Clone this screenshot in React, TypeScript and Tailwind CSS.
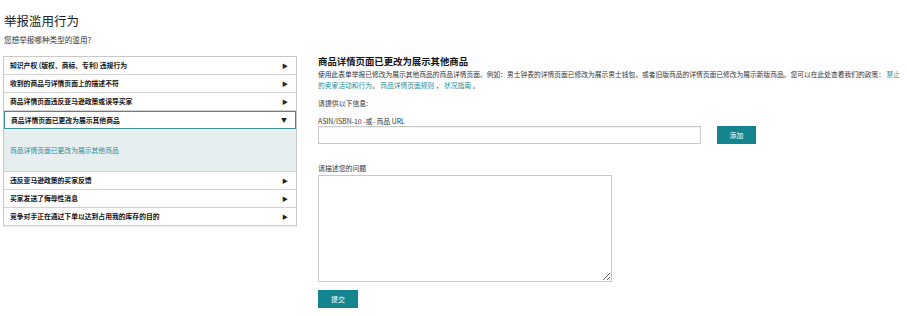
const rowsTop = [
  '知识产权 (版权、商标、专利) 违规行为',
  '收到的商品与详情页面上的描述不符',
  '商品详情页面违反亚马逊政策或误导买家',
];

const rowsBottom = [
  '违反亚马逊政策的买家反馈',
  '买家发送了侮辱性消息',
  '竞争对手正在通过下单以达到占用我的库存的目的',
];

const Row = ({ label }: { label: string }) => (
  <div className="flex h-[18px] items-center justify-between border-b border-[#d2d2d2] pl-[6px] pr-[8px]">
    <span className="text-[6.8px] font-bold leading-none text-[#111]">{label}</span>
    <span className="text-[6px] leading-none text-[#222]">▶</span>
  </div>
);

export default function App() {
  return (
    <div className="min-h-[316px] bg-white font-['Noto_Sans_CJK_SC','Noto_Sans',sans-serif] text-[#111]">
      <div className="pl-[4px] pt-[13px]">
        <h1 className="text-[12.5px] font-normal leading-[16px] text-[#222]">举报滥用行为</h1>
        <p className="mt-[6px] text-[7.6px] leading-[10px] text-[#333]">您想举报哪种类型的滥用?</p>
      </div>

      <div className="mt-[11px] flex items-start">
        {/* abuse type list */}
        <div className="ml-[3px] w-[294px] shrink-0 border border-b-0 border-[#c8c8c8] shadow-[0_1px_1px_rgba(0,0,0,0.08)]">
          {rowsTop.map((r) => (
            <Row key={r} label={r} />
          ))}
          <div className="flex h-[18px] items-center justify-between border border-[#3f8f96] pl-[6px] pr-[8px]">
            <span className="text-[6.8px] font-bold leading-none text-[#111]">商品详情页面已更改为展示其他商品</span>
            <span className="text-[6px] leading-none text-[#222]">▼</span>
          </div>
          <div className="flex h-[43px] items-center border-b border-[#d2d2d2] bg-[#e6eef0] pl-[6px]">
            <span className="text-[6.8px] leading-none text-[#2a8d99]">商品详情页面已更改为展示其他商品</span>
          </div>
          {rowsBottom.map((r) => (
            <Row key={r} label={r} />
          ))}
        </div>

        {/* form */}
        <div className="ml-[21px] min-w-0 flex-1">
          <h2 className="-mt-[1px] text-[9.4px] font-bold leading-[12px] text-[#111]">商品详情页面已更改为展示其他商品</h2>
          <div className="mt-[2px] text-[6.75px] leading-[11px] text-[#333]">
            <p className="whitespace-nowrap">
              使用此表单举报已修改为展示其他商品的商品详情页面。例如：男士钟表的详情页面已修改为展示男士钱包，或者旧版商品的详情页面已修改为展示新版商品。您可以在此处查看我们的政策：{' '}
              <span className="text-[#1f8c98]">禁止</span>
            </p>
            <p>
              <span className="text-[#1f8c98]">的卖家活动和行为</span>。{' '}
              <span className="text-[#1f8c98]">商品详情页面规则</span> ，{' '}
              <span className="text-[#1f8c98]">状况指南</span> 。
            </p>
          </div>

          <p className="mt-[7px] text-[6.9px] leading-[10px] text-[#333]">请提供以下信息:</p>

          <p className="mt-[8px] text-[6.9px] leading-[10px] text-[#333]">ASIN/ISBN-10 -或- 商品 URL</p>
          <div className="flex items-center">
            <input
              type="text"
              className="h-[18px] w-[383px] border border-[#c9c9c9] bg-white shadow-[inset_0_1px_1px_rgba(0,0,0,0.06)] outline-none"
            />
            <button className="ml-[16px] h-[18px] w-[39px] bg-[#14858f] text-[6.9px] leading-none text-white">
              添加
            </button>
          </div>

          <p className="mt-[19px] text-[6.9px] leading-[10px] text-[#333]">请描述您的问题</p>
          <textarea className="mt-[2px] block h-[107px] w-[294px] resize border border-[#c9c9c9] bg-white outline-none" />

          <button className="mt-[8px] h-[18px] w-[40px] bg-[#14858f] text-[6.9px] leading-none text-white">
            提交
          </button>
        </div>
      </div>
    </div>
  );
}
